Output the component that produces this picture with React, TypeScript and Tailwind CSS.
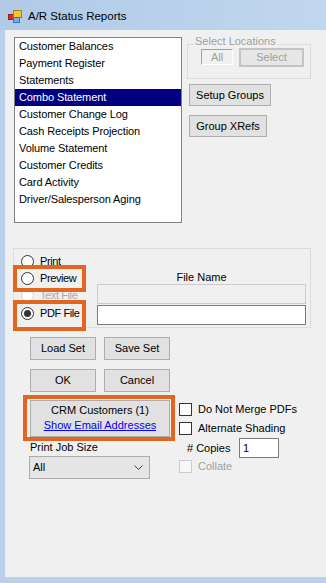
import React from "react";

function Btn({ children, className }: { children: React.ReactNode; className: string }) {
  return (
    <div className={`flex items-center justify-center border border-[#adadad] bg-[#e1e1e1] text-black ${className}`}>
      {children}
    </div>
  );
}

function Radio({ label, checked, disabled }: { label: string; checked?: boolean; disabled?: boolean }) {
  return (
    <div className="flex h-[17px] items-center">
      <span
        className={`flex h-[13px] w-[13px] items-center justify-center rounded-full border bg-white ${
          disabled ? "border-[#d4d4d4]" : "border-[#333333]"
        }`}
      >
        {checked && <span className="h-[7px] w-[7px] rounded-full bg-[#333333]" />}
      </span>
      <span className={`ml-[6px] tracking-[-0.4px] ${disabled ? "text-[#a9a9a9]" : "text-black"}`}>{label}</span>
    </div>
  );
}

function Check({ label, disabled }: { label: string; disabled?: boolean }) {
  return (
    <div className="flex h-[13px] items-center">
      <span
        className={`h-[13px] w-[13px] border ${
          disabled ? "border-[#cccccc] bg-[#f7f7f7]" : "border-[#333333] bg-white"
        }`}
      />
      <span className={`ml-[6px] whitespace-nowrap ${disabled ? "text-[#a0a0a0]" : "text-black"}`}>{label}</span>
    </div>
  );
}

const items = [
  "Customer Balances",
  "Payment Register",
  "Statements",
  "Combo Statement",
  "Customer Change Log",
  "Cash Receipts Projection",
  "Volume Statement",
  "Customer Credits",
  "Card Activity",
  "Driver/Salesperson Aging",
];

export default function App() {
  return (
    <div className="flex h-[583px] w-[326px] flex-col overflow-hidden bg-[#b9d1ea] font-['Liberation_Sans',Arial,sans-serif] text-[11px] leading-[13px] text-black">
      {/* Title bar */}
      <div className="flex h-[30px] items-center bg-gradient-to-r from-[#b0cae7] to-[#c1d7ee] pl-[8px] pt-[2px]">
        <svg width="14" height="13" viewBox="0 0 14 13">
          <rect x="0.5" y="4.5" width="5" height="5" fill="#e02828" stroke="#9a1c1c" />
          <rect x="5.5" y="0.5" width="8" height="7" fill="#f6c52a" stroke="#a8811a" />
          <rect x="5.5" y="7.5" width="6" height="5" fill="#74aef0" stroke="#3f73b0" />
        </svg>
        <span className="ml-[6px] text-[11.5px]">A/R Status Reports</span>
      </div>

      <div className="flex flex-1">
        <div className="w-[5px]" />
        <div className="relative flex-1 bg-[#f0f0f0]">
          {/* top section */}
          <div className="flex pl-[9px] pt-[7px]">
            <div className="h-[186px] w-[168px] border border-[#828282] bg-white">
              {items.map((it) => (
                <div
                  key={it}
                  className={`flex h-[17px] items-center pl-[4px] tracking-[-0.1px] ${
                    it === "Combo Statement" ? "bg-[#000080] text-white" : "text-black"
                  }`}
                >
                  {it}
                </div>
              ))}
            </div>
            <div className="ml-[5px] flex flex-col">
              <div className="relative mt-[7px] h-[35px] w-[124px] border border-[#dcdcdc]">
                <span className="absolute left-[6px] top-[-10px] bg-[#f0f0f0] px-[1px] text-[#a0a0a0]">
                  Select Locations
                </span>
                <div className="ml-[13px] mt-[4px] flex items-start">
                  <div className="flex h-[16px] w-[32px] items-center justify-center border-b border-l border-r border-t border-b-white border-l-[#a0a0a0] border-r-white border-t-[#a0a0a0] text-[#a0a0a0]">
                    All
                  </div>
                  <div className="ml-[6px] mt-[-1px] flex h-[19px] w-[65px] items-center justify-center border-2 border-[#c4c4c4] bg-[#e6e6e6] text-[#a0a0a0]">
                    Select
                  </div>
                </div>
              </div>
              <Btn className="ml-[2px] mt-[5px] h-[22px] w-[82px]">Setup Groups</Btn>
              <Btn className="ml-[2px] mt-[9px] h-[22px] w-[78px]">Group XRefs</Btn>
            </div>
          </div>

          {/* output group */}
          <div className="ml-[8px] mt-[25px] flex h-[80px] w-[298px] border border-[#dcdcdc]">
            <div className="w-[83px] pl-[7px] pt-[4px]">
              <Radio label="Print" />
              <Radio label="Preview" />
              <Radio label="Text File" disabled />
              <div className="mt-[1px]">
                <Radio label="PDF File" checked />
              </div>
            </div>
            <div className="flex w-[209px] flex-col pt-[22px]">
              <div className="text-center">File Name</div>
              <div className="h-[20px] border border-[#cccccc] bg-[#f0f0f0]" />
              <div className="mt-[1px] h-[20px] border border-[#7a7a7a] bg-white" />
            </div>
          </div>

          {/* bottom section */}
          <div className="mt-[9px] flex pl-[25px]">
            <div className="flex w-[140px] flex-col">
              <div className="flex">
                <Btn className="h-[23px] w-[66px]">Load Set</Btn>
                <Btn className="ml-[8px] h-[23px] w-[66px]">Save Set</Btn>
              </div>
              <div className="mt-[9px] flex">
                <Btn className="h-[23px] w-[66px]">OK</Btn>
                <Btn className="ml-[8px] h-[23px] w-[66px]">Cancel</Btn>
              </div>
              <div className="mt-[8px] flex h-[37px] w-[140px] flex-col items-center border border-[#adadad] bg-[#e1e1e1] pt-[3px]">
                <span>CRM Customers (1)</span>
                <span className="mt-[2px] text-[#0000ff] underline">Show Email Addresses</span>
              </div>
              <div className="mt-[4px]">Print Job Size</div>
              <div className="ml-[-1px] mt-[2px] flex h-[23px] w-[121px] items-center justify-between border border-[#acacac] bg-[#e5e5e5] pl-[3px] pr-[6px]">
                <span>All</span>
                <svg width="9" height="6" viewBox="0 0 9 6">
                  <path d="M0.5 0.5 L4.5 4.5 L8.5 0.5" fill="none" stroke="#444" strokeWidth="1" />
                </svg>
              </div>
            </div>
            <div className="ml-[9px] mt-[66px] flex flex-col">
              <Check label="Do Not Merge PDFs" />
              <div className="mt-[6px]">
                <Check label="Alternate Shading" />
              </div>
              <div className="mt-[3px] flex h-[20px] items-center pl-[8px]">
                <span className="w-[52px]">#&nbsp;Copies</span>
                <div className="flex h-[20px] w-[40px] items-center border border-[#7a7a7a] bg-white pl-[3px]">1</div>
              </div>
              <div className="mt-[2px]">
                <Check label="Collate" disabled />
              </div>
            </div>
          </div>

          {/* annotation boxes */}
          <div className="absolute left-[8px] top-[235px] h-[27px] w-[73px] border-[4px] border-[#e2661f]" />
          <div className="absolute left-[8px] top-[270px] h-[31px] w-[73px] border-[4px] border-[#e2661f]" />
          <div className="absolute left-[18px] top-[365px] h-[46px] w-[152px] border-[4px] border-[#e2661f]" />
        </div>
      </div>
      <div className="h-[6px]" />
    </div>
  );
}
